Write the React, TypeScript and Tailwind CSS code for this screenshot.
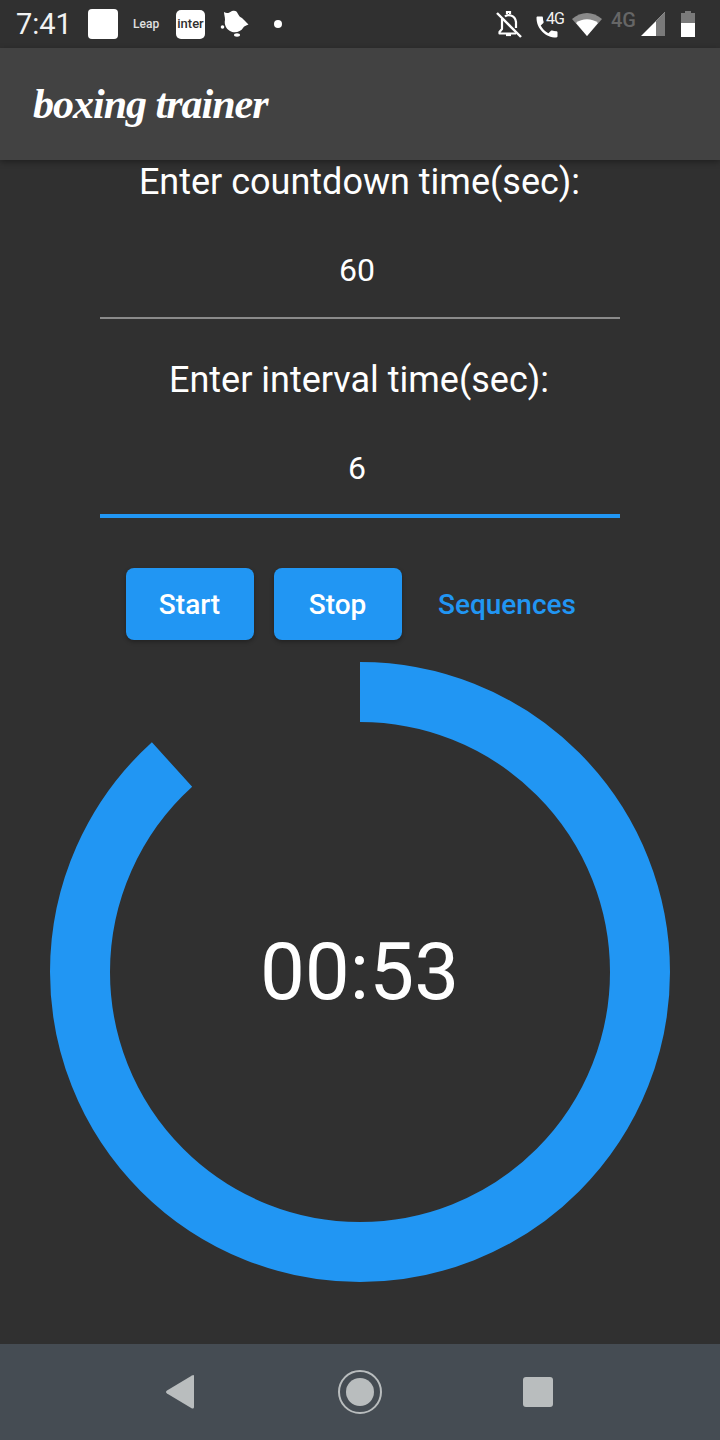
import React from "react";

function Bell() {
  return (
    <svg width="28" height="28" viewBox="0 0 28 28" fill="none" stroke="#fff" strokeWidth="2.2">
      <path d="M7 9 L7 19 L4.5 22 L4.5 23.5 L21 23.5" strokeLinejoin="round" />
      <path d="M10 6.5 C12 4.5 20 4 21 12 L21 18" />
      <path d="M12 4 L12 2 L15 2 L15 4" />
      <path d="M11 25 L16 25" />
      <path d="M2 3 L26 27" strokeWidth="2.4" />
    </svg>
  );
}

function Phone() {
  return (
    <svg width="28" height="28" viewBox="0 0 24 24" fill="#fff">
      <path d="M6.6 10.8c1.4 2.8 3.8 5.1 6.6 6.6l2.2-2.2c.3-.3.7-.4 1-.2 1.1.4 2.3.6 3.6.6.6 0 1 .4 1 1V20c0 .6-.4 1-1 1C10.6 21 3 13.4 3 4c0-.6.4-1 1-1h3.5c.6 0 1 .4 1 1 0 1.3.2 2.5.6 3.6.1.3 0 .7-.2 1z" />
    </svg>
  );
}

function Ring() {
  const r = 280;
  const c = 2 * Math.PI * r;
  const frac = 0.8825;
  return (
    <svg width="620" height="620" viewBox="0 0 620 620" className="block">
      <circle
        cx="310"
        cy="310"
        r={r}
        fill="none"
        stroke="#2196f3"
        strokeWidth="60"
        strokeDasharray={`${c * frac} ${c}`}
        transform="rotate(-90 310 310)"
      />
    </svg>
  );
}

export default function App() {
  return (
    <div className="w-[720px] h-[1440px] flex flex-col bg-[#303030] text-white overflow-hidden font-['Roboto',sans-serif]">
      <div className="h-12 shrink-0 flex items-center bg-[#303030] relative">
        <span className="ml-4 text-[29px] leading-none text-[#f2f2f2] w-[56px]">7:41</span>
        <div className="ml-[16px] w-[30px] h-[30px] rounded-[4px] bg-white" />
        <span className="ml-[15px] text-[12px] leading-none font-medium text-[#e0e0e0] w-[28px]">Leap</span>
        <div className="ml-[15px] w-[29px] h-[29px] rounded-[5px] bg-white text-[#303030] text-[13px] font-medium flex items-center justify-center">
          inter
        </div>
        <svg width="30" height="30" viewBox="0 0 30 30" fill="#fff" className="ml-[14px]">
          <path d="M5 3 C8 5 10 4 13 2 C16 1 18 2 19 5 C20 7 21 8 23 9 C25 11 27 13 29.5 15.5 C27 16.5 25 17 24 19 C22 23 15 24.5 11 22 C7 20 5 15 6 11 C6 8 5 5 5 3 Z" />
          <circle cx="3.5" cy="18" r="1.8" />
          <ellipse cx="18" cy="26" rx="3" ry="1.7" />
        </svg>
        <div className="ml-[25px] w-2 h-2 rounded-full bg-white" />
        <div className="absolute left-[495px] top-[10px]">
          <Bell />
        </div>
        <div className="absolute left-[533px] top-[13px]">
          <Phone />
        </div>
        <span className="absolute left-[546px] top-[11px] text-[16px] leading-none tracking-[-1px] text-[#f2f2f2]">4G</span>
        <svg width="32" height="24" viewBox="0 0 32 24" fill="#fff" className="absolute left-[571px] top-[12px]">
          <path d="M1 7 C10 -1 22 -1 31 7 L16 24 Z" fill="#8a8a8a" />
          <path d="M5 11 C11 6 21 6 27 11 L16 24 Z" />
        </svg>
        <span className="absolute left-[611px] top-[10px] text-[20px] leading-none font-medium text-[#666]">4G</span>
        <svg width="24" height="24" viewBox="0 0 24 24" className="absolute left-[641px] top-[12px]">
          <path d="M0 24 L24 0 L24 24 Z" fill="#fff" />
          <path d="M15 9 L24 0 L24 24 L15 24 Z" fill="#7a7a7a" />
        </svg>
        <svg width="14" height="26" viewBox="0 0 14 26" className="absolute left-[681px] top-[11px]">
          <path d="M4 0 H10 V2 H14 V12 H0 V2 H4 Z" fill="#7a7a7a" />
          <path d="M0 12 H14 V26 H0 Z" fill="#fff" />
        </svg>
      </div>

      <div className="h-28 shrink-0 bg-[#424242] flex items-center pl-[33px] shadow-[0_2px_6px_rgba(0,0,0,0.35)] relative">
        <span className="font-['Liberation_Serif',cursive] italic font-bold text-[42px] leading-none tracking-[-1px] text-white">
          boxing trainer
        </span>
      </div>

      <div className="flex-1 flex flex-col items-center">
        <div className="text-[36px] leading-[42px] mt-[1px] pr-[1px] text-center">Enter countdown time(sec):</div>
        <div className="w-[520px] h-[116px] border-b-2 border-[#8a8a8a] flex items-center justify-center text-[32px] pt-[20px]">
          <span className="mr-[6px]">60</span>
        </div>
        <div className="text-[36px] leading-[42px] mt-[40px] pr-[2px] text-center">Enter interval time(sec):</div>
        <div className="w-[520px] h-[117px] border-b-4 border-[#2196f3] flex items-center justify-center text-[32px] pt-[21px]">
          <span className="mr-[6px]">6</span>
        </div>
        <div className="mt-[50px] flex items-center self-start ml-[126px]">
          <button className="w-32 h-[72px] pt-[2px] pr-[1px] rounded-lg bg-[#2196f3] text-[28px] font-medium shadow-[0_2px_4px_rgba(0,0,0,0.3)]">Start</button>
          <button className="ml-5 w-32 h-[72px] pt-[2px] pr-[1px] rounded-lg bg-[#2196f3] text-[28px] font-medium shadow-[0_2px_4px_rgba(0,0,0,0.3)]">Stop</button>
          <span className="ml-[36px] pt-[2px] text-[28px] font-medium text-[#2196f3]">Sequences</span>
        </div>
        <div className="mt-[22px] relative">
          <Ring />
          <div className="absolute inset-0 flex items-center justify-center pr-[1px] text-[80px] leading-none">00:53</div>
        </div>
      </div>

      <div className="h-24 shrink-0 bg-[#454c53] flex items-center relative">
        <svg width="32" height="36" viewBox="0 0 32 36" fill="#b9bdbe" className="absolute left-[164px] top-[30px]">
          <path d="M30 2 L30 33 Q30 35 28 34.5 L3 19.5 Q1 18 3 16.5 L28 1.5 Q30 0.5 30 2 Z" />
        </svg>
        <div className="absolute left-[338px] top-[26px] w-11 h-11 rounded-full border-2 border-[#b9bdbe] flex items-center justify-center">
          <div className="w-7 h-7 rounded-full bg-[#b9bdbe]" />
        </div>
        <div className="absolute left-[523px] top-[33px] w-[30px] h-[30px] rounded-[3px] bg-[#b9bdbe]" />
      </div>
    </div>
  );
}
